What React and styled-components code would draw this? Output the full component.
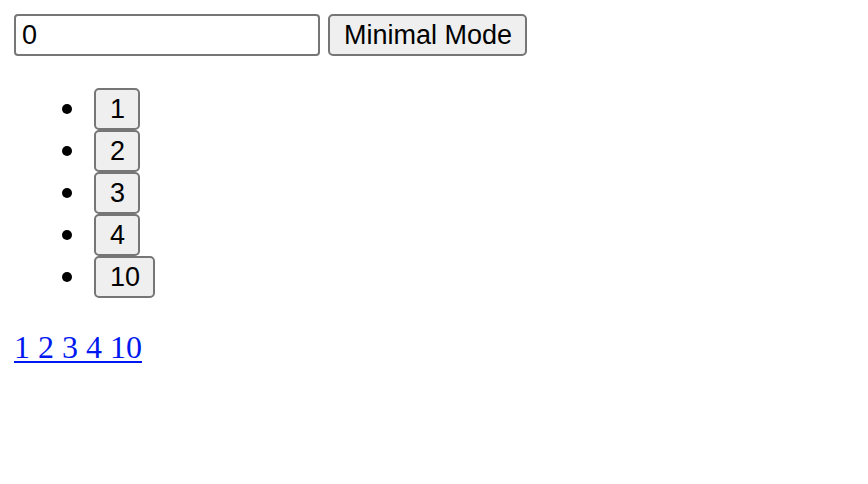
import React, { useState } from "react";
import styled, { createGlobalStyle, css } from "styled-components";

const GlobalStyle = createGlobalStyle`
  body {
    margin: 0;
    background: #fff;
    color: #000;
    font-family: "Liberation Serif", "Times New Roman", serif;
    font-size: 32px;
    line-height: 34px;
  }
`;

const Page = styled.main`
  display: flex;
  flex-direction: column;
  align-items: flex-start;
  gap: 32px;
  padding: 14px;
`;

const Toolbar = styled.div`
  display: flex;
  flex-wrap: wrap;
  gap: 8px;
`;

const control = css`
  box-sizing: border-box;
  height: 42px;
  margin: 0;
  border: 2px solid #767676;
  color: #000;
  font-family: "Liberation Sans", Arial, sans-serif;
  font-size: 27px;
  line-height: 30px;
`;

const ValueInput = styled.input`
  ${control}
  width: 306px;
  max-width: 100%;
  padding: 2px 6px;
  border-radius: 4px;
  background: #fff;
`;

const Button = styled.button`
  ${control}
  padding: 2px 13px 2px 14px;
  border-radius: 5px;
  background: #efefef;
`;

const ValueList = styled.ul`
  margin: 0;
  padding: 0 0 0 48px;
  list-style: none;
`;

const ValueItem = styled.li`
  display: flex;
  align-items: center;
  gap: 22px;

  &::before {
    content: "";
    width: 10px;
    height: 10px;
    border-radius: 50%;
    background: #000;
  }
`;

const SummaryLink = styled.a`
  color: #0018f0;
  text-decoration: underline;
  text-decoration-thickness: 2px;
  text-underline-offset: 3px;
`;

const values = [1, 2, 3, 4, 10];

export default function App() {
  const [value, setValue] = useState("0");
  return (
    <>
      <GlobalStyle />
      <Page>
        <Toolbar>
          <ValueInput
            aria-label="Value"
            value={value}
            onChange={(event) => setValue(event.target.value)}
          />
          <Button type="button">Minimal Mode</Button>
        </Toolbar>
        <ValueList>
          {values.map((item) => (
            <ValueItem key={item}>
              <Button type="button" onClick={() => setValue(String(item))}>
                {item}
              </Button>
            </ValueItem>
          ))}
        </ValueList>
        <SummaryLink href="#values">{values.join(" ")}</SummaryLink>
      </Page>
    </>
  );
}
